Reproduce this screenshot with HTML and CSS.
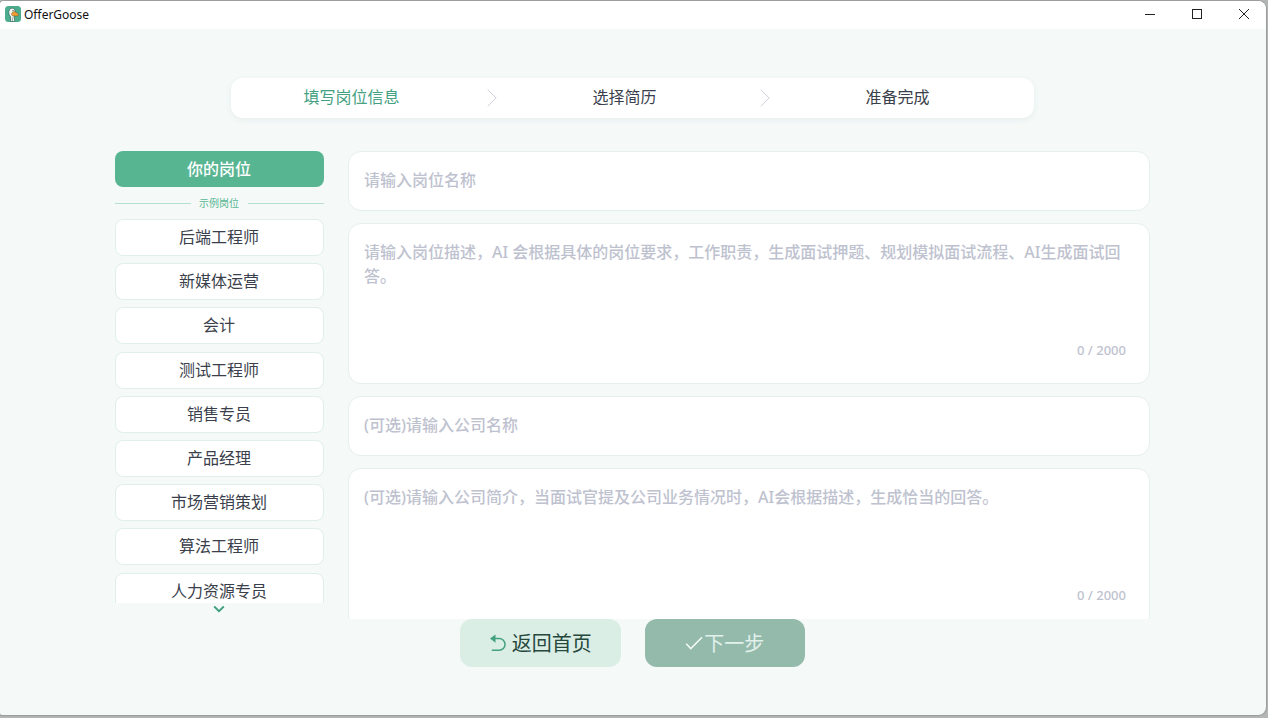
FILE: index.html
```html
<!DOCTYPE html>
<html lang="zh-CN">
<head>
    <meta charset="UTF-8">
    <meta name="viewport" content="width=device-width, initial-scale=1.0">
    <title>OfferGoose</title>
    <link rel="stylesheet" href="styles.css">
</head>
<body>
    <div class="window">
        <header class="titlebar">
            <svg class="logo" viewBox="0 0 16 16">
                <rect width="16" height="16" rx="3.500" fill="#4bac8e"/>
                <path d="M5.500 15.500V10.500C3.500 9 3.200 5.500 4.600 3.600 5.800 1.800 8.400 1.700 9.500 3.200L10.500 6.500 9 10.500l.8 5z" fill="#f4f7f4" stroke="#2c5548" stroke-width=".6"/>
                <path d="M6.600 7.600c.6-1.500 2-2.300 3.300-1.900 1.600.6 2.700 1.600 3.700 2.900.3.900-.4 1.300-1.300 1.300H8.800C7.200 9.900 6.200 9 6.600 7.600z" fill="#f2a033" stroke="#6b5428" stroke-width=".5"/>
                <circle cx="8" cy="4.600" r=".6" fill="#333"/>
                <path d="M7.300 11.500v4" stroke="#2c5548" stroke-width=".5"/>
            </svg>
            <span class="app-name">OfferGoose</span>
            <div class="window-actions">
                <svg viewBox="0 0 12 12"><path d="M1 6.500h10"/></svg>
                <svg viewBox="0 0 12 12"><rect x="1.500" y="1.500" width="9" height="9"/></svg>
                <svg viewBox="0 0 12 12"><path d="M1 1l10 10M11 1L1 11"/></svg>
            </div>
        </header>

        <nav class="steps">
            <span class="step active">填写岗位信息</span>
            <svg class="arrow" viewBox="0 0 10 18"><path d="M.7.700L9.200 9 .7 17.300"/></svg>
            <span class="step">选择简历</span>
            <svg class="arrow" viewBox="0 0 10 18"><path d="M.7.700L9.200 9 .7 17.300"/></svg>
            <span class="step">准备完成</span>
        </nav>

        <main class="content">
            <aside class="sidebar">
                <button class="job current">你的岗位</button>
                <div class="divider"><span>示例岗位</span></div>
                <div class="job-list">
                    <button class="job">后端工程师</button>
                    <button class="job">新媒体运营</button>
                    <button class="job">会计</button>
                    <button class="job">测试工程师</button>
                    <button class="job">销售专员</button>
                    <button class="job">产品经理</button>
                    <button class="job">市场营销策划</button>
                    <button class="job">算法工程师</button>
                    <button class="job">人力资源专员</button>
                </div>
                <svg class="more" viewBox="0 0 12 8"><path d="M1.200 1.500L6 6.200l4.800-4.700"/></svg>
            </aside>

            <form class="job-form">
                <div class="field">
                    <input type="text" placeholder="请输入岗位名称">
                </div>
                <div class="field large">
                    <textarea placeholder="请输入岗位描述，AI 会根据具体的岗位要求，工作职责，生成面试押题、规划模拟面试流程、AI生成面试回答。"></textarea>
                    <span class="count">0 / 2000</span>
                </div>
                <div class="field">
                    <input type="text" placeholder="(可选)请输入公司名称">
                </div>
                <div class="field large">
                    <textarea placeholder="(可选)请输入公司简介，当面试官提及公司业务情况时，AI会根据描述，生成恰当的回答。"></textarea>
                    <span class="count">0 / 2000</span>
                </div>
            </form>
        </main>

        <footer class="footer">
            <button class="btn back">
                <svg viewBox="0 0 18 18"><path d="M3 4.500h7.200a5.700 5.700 0 0 1 0 11.700H2.800"/><path class="head" d="M6.500.5v8.200L1 4.600z"/></svg>
                返回首页
            </button>
            <button class="btn next">
                <svg viewBox="0 0 18 18"><path d="M1.200 9.800l4.600 4.800L17 3.300"/></svg>
                下一步
            </button>
        </footer>
    </div>
</body>
</html>
```

FILE: styles.css
```css
* {
    box-sizing: border-box;
}
body {
    margin: 0;
    height: 718px;
    padding: 1px 2px 3px 0;
    overflow: hidden;
    background: #b3b6b5;
    font-family: 'Noto Sans', 'Noto Sans CJK SC', sans-serif;
    color: #3b3f4c;
}
button, input, textarea {
    font-family: inherit;
}
svg {
    display: block;
    flex: none;
    fill: none;
}
.window {
    height: 714px;
    background: #f5faf9;
    border-radius: 4px 8px 8px 2px;
    overflow: hidden;
    box-shadow: 0 0 1px 1px #999c9b;
}
.titlebar {
    height: 28px;
    display: flex;
    align-items: center;
    padding: 0 16px 2px 5px;
    background: #fff;
}
.logo {
    width: 16px;
    height: 16px;
}
.app-name {
    margin-left: 3px;
    padding-top: 1px;
    font-size: 12px;
    line-height: 16px;
    color: #111;
}
.window-actions {
    display: flex;
    gap: 35px;
    margin-left: auto;
}
.window-actions svg {
    width: 12px;
    height: 12px;
    stroke: #222;
    stroke-width: 1;
}
.steps {
    width: 803px;
    height: 40px;
    margin: 49px 0 0 231px;
    display: grid;
    grid-template-columns: 241px 32px 241px 32px 241px;
    align-items: center;
    background: #fff;
    border-radius: 12px;
    box-shadow: 0 2px 6px rgba(40, 80, 70, 0.07);
}
.step {
    padding-bottom: 2px;
    font-size: 16px;
    line-height: 24px;
    text-align: center;
}
.step.active {
    color: #45a181;
}
.arrow {
    width: 10px;
    height: 18px;
    margin-left: 15px;
    stroke: #cfd2dc;
}
.content {
    display: flex;
    gap: 24px;
    height: 468px;
    margin: 33px 0 0 115px;
    overflow: hidden;
}
.sidebar {
    width: 209px;
}
.job {
    display: block;
    flex: none;
    width: 100%;
    height: 37px;
    padding: 0 1px 1px 0;
    font-size: 16px;
    line-height: 24px;
    color: #3b3f4c;
    background: #fff;
    border: 1px solid #dfefe9;
    border-radius: 8px;
}
.job.current {
    height: 36px;
    padding-bottom: 0;
    color: #fff;
    font-weight: 500;
    background: #58b592;
    border: none;
}
.divider {
    display: flex;
    align-items: center;
    gap: 8px;
    height: 32px;
    font-size: 10px;
    color: #58b592;
}
.divider span {
    padding: 0 1px 2px 0;
}
.divider::before, .divider::after {
    content: "";
    flex: 1;
    height: 1px;
    background: #b5dfcf;
}
.job-list {
    display: flex;
    flex-direction: column;
    gap: 7.200px;
    height: 384px;
    overflow: hidden;
}
.more {
    width: 12px;
    height: 8px;
    margin: 2px auto 0 98px;
    stroke: #3d9f7c;
    stroke-width: 1.800;
}
.job-form {
    width: 802px;
    display: flex;
    flex-direction: column;
    gap: 12px;
}
.field {
    flex: none;
    height: 60px;
    padding: 16px 15px;
    background: #fff;
    border: 1px solid #e6eff0;
    border-radius: 13px;
}
.field.large {
    height: 161px;
    display: flex;
    flex-direction: column;
    padding-right: 23px;
}
.field input, .field textarea {
    display: block;
    width: 100%;
    height: 24px;
    padding: 0;
    border: none;
    outline: none;
    resize: none;
    background: transparent;
    font-size: 16px;
    font-weight: 500;
    line-height: 24px;
}
.field textarea {
    height: 98px;
    overflow: hidden;
}
::placeholder {
    color: #bec2cf;
}
.count {
    align-self: flex-end;
    font-size: 13px;
    font-weight: 500;
    line-height: 24px;
    color: #bec2cf;
}
.footer {
    display: flex;
    gap: 24px;
    margin-left: 460px;
}
.btn {
    width: 160.500px;
    height: 48px;
    display: flex;
    align-items: center;
    justify-content: center;
    padding: 0 0 2px;
    border: none;
    border-radius: 12px;
    font-size: 20px;
}
.btn svg {
    width: 18px;
    height: 18px;
    margin-top: 2px;
    stroke-width: 1.500;
}
.back {
    gap: 5px;
    color: #26483d;
    background: #daeee5;
}
.back svg {
    stroke: #43a17e;
}
.back .head {
    fill: #43a17e;
    stroke: none;
}
.next {
    gap: 1px;
    color: #e2f1eb;
    background: #94baab;
}
.next svg {
    stroke: #f3faf7;
}
```
